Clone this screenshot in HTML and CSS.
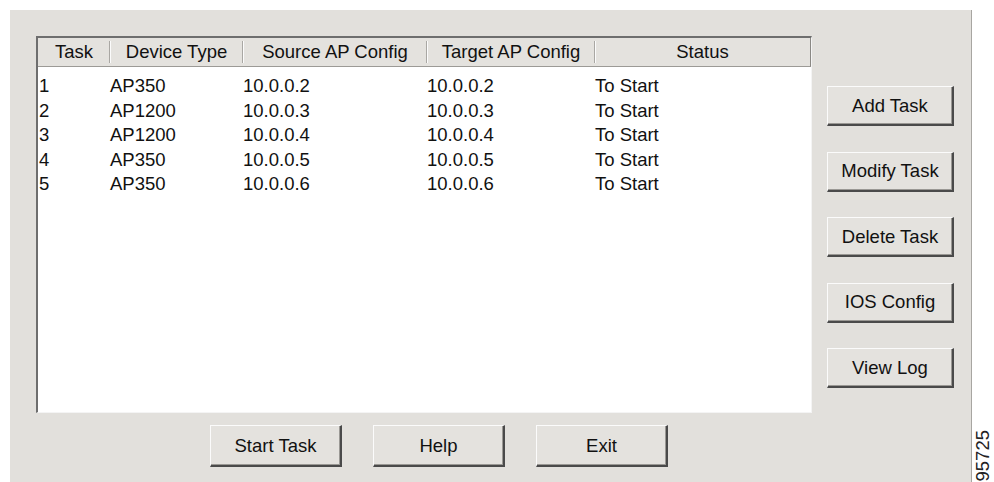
FILE: index.html
```html
<!DOCTYPE html>
<html lang="en">
<head>
<meta charset="utf-8">
<title>Task Manager</title>
<link rel="stylesheet" href="styles.css">
</head>
<body>
<div class="panel">
  <div class="top">
    <div class="list">
      <div class="head">
        <div class="hcell">Task</div>
        <div class="hcell">Device Type</div>
        <div class="hcell">Source AP Config</div>
        <div class="hcell">Target AP Config</div>
        <div class="hcell last">Status</div>
      </div>
      <div class="rows">
        <div class="row"><span>1</span><span>AP350</span><span>10.0.0.2</span><span>10.0.0.2</span><span>To Start</span></div>
        <div class="row"><span>2</span><span>AP1200</span><span>10.0.0.3</span><span>10.0.0.3</span><span>To Start</span></div>
        <div class="row"><span>3</span><span>AP1200</span><span>10.0.0.4</span><span>10.0.0.4</span><span>To Start</span></div>
        <div class="row"><span>4</span><span>AP350</span><span>10.0.0.5</span><span>10.0.0.5</span><span>To Start</span></div>
        <div class="row"><span>5</span><span>AP350</span><span>10.0.0.6</span><span>10.0.0.6</span><span>To Start</span></div>
      </div>
    </div>
    <div class="side-buttons">
      <button class="btn side">Add Task</button>
      <button class="btn side">Modify Task</button>
      <button class="btn side">Delete Task</button>
      <button class="btn side">IOS Config</button>
      <button class="btn side">View Log</button>
    </div>
  </div>
  <div class="bottom-buttons">
    <button class="btn wide">Start Task</button>
    <button class="btn wide">Help</button>
    <button class="btn wide">Exit</button>
  </div>
</div>
<div class="fig-label"><span>95725</span></div>
</body>
</html>
```

FILE: styles.css
```css
html, body {
  margin: 0;
  padding: 0;
  background: #ffffff;
}

body {
  display: flex;
  height: 482px;
  overflow: hidden;
  font-family: "Liberation Sans", Arial, sans-serif;
  font-size: 18.5px;
  color: #111;
}

/* dialog surface */
.panel {
  margin: 10px 0 0 10px;
  width: 962px;
  height: 472px;
  background: #e2e0dc;
  border-right: 1px solid #a8a6a2;
  padding: 26px 0 0 26px;
  box-sizing: border-box;
  display: flex;
  flex-direction: column;
}

.top {
  display: flex;
  align-items: flex-start;
}

/* sunken list view */
.list {
  width: 776px;
  height: 377px;
  box-sizing: border-box;
  background: #fff;
  border-style: solid;
  border-width: 2px 1px 1px 2px;
  border-color: #6e6e6e #f4f4f4 #f4f4f4 #6e6e6e;
  display: flex;
  flex-direction: column;
}

.head,
.row {
  display: grid;
  grid-template-columns: 72px 133px 184px 168px 1fr;
}

.head {
  height: 29px;
  background: #e4e2de;
  border-bottom: 1px solid #9c9a96;
  box-sizing: border-box;
  border-right: 1px solid #8a8884;
}

.hcell {
  display: flex;
  align-items: center;
  justify-content: center;
  padding-top: 1px;
  position: relative;
  line-height: 1;
}

.hcell::after {
  content: "";
  position: absolute;
  right: 0;
  top: 3px;
  bottom: 3px;
  width: 1px;
  background: #a9a7a3;
  box-shadow: 1px 0 0 #fbfbfb;
}

.hcell.last::after {
  display: none;
}

.rows {
  padding-top: 7px;
}

.row {
  height: 24.5px;
  line-height: 24.5px;
  white-space: nowrap;
}

.row span:first-child {
  padding-left: 1px;
}

/* classic 3D push buttons */
.btn {
  font-family: inherit;
  font-size: 18.5px;
  color: #111;
  background: #e4e2de;
  border-style: solid;
  border-width: 1px 2px 2px 1px;
  border-color: #fbfbfb #4a4a4a #4a4a4a #fbfbfb;
  box-shadow: inset -1px -1px 0 #9a9894;
  padding: 0;
  margin: 0;
  box-sizing: border-box;
}

.side-buttons {
  margin-left: 15px;
  padding-top: 50px;
  display: flex;
  flex-direction: column;
  gap: 25.5px;
}

.btn.side {
  width: 127px;
  height: 40px;
}

.bottom-buttons {
  display: flex;
  gap: 31px;
  margin-top: 12px;
  padding-left: 174px;
}

.btn.wide {
  width: 132px;
  height: 42px;
}

/* figure number printed along the right margin */
.fig-label {
  flex: 1;
  display: flex;
  align-items: flex-end;
  justify-content: center;
  padding-bottom: 1px;
}

.fig-label span {
  writing-mode: vertical-rl;
  transform: rotate(180deg);
  font-size: 18.5px;
  line-height: 1;
  color: #222;
}
```
